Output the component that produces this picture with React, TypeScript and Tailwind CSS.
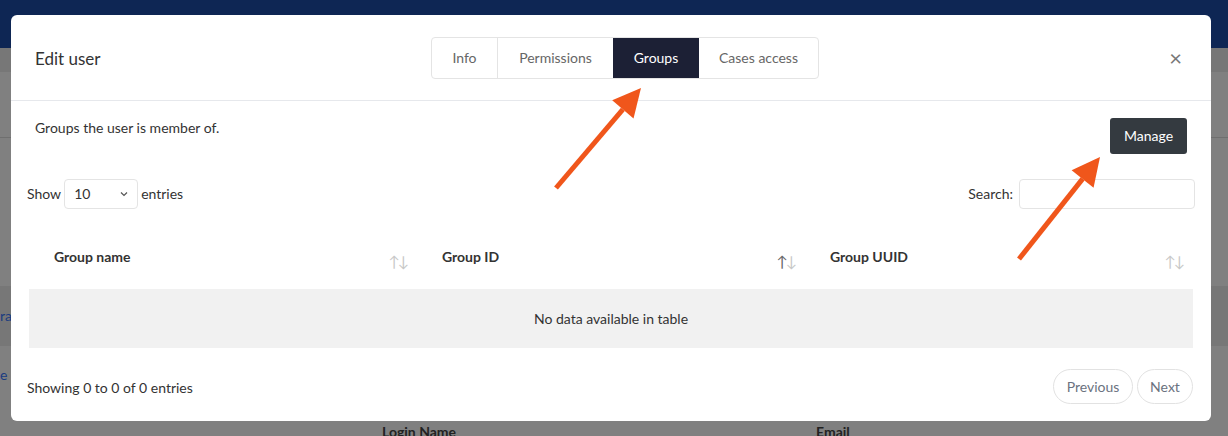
import React from 'react';

const tabs = ['Info', 'Permissions', 'Groups', 'Cases access'];

function SortIcon({ dark }: { dark?: boolean }) {
  return (
    <span className="flex text-[15px] font-normal leading-none tracking-[-2px]">
      <span className={dark ? 'text-[#666]' : 'text-[#c8c8c8]'}>↑</span>
      <span className="text-[#c8c8c8]">↓</span>
    </span>
  );
}

function Arrow({ x1, y1, x2, y2 }: { x1: number; y1: number; x2: number; y2: number }) {
  const ang = Math.atan2(y2 - y1, x2 - x1);
  const len = 28;
  const w = 14;
  const bx = x2 - len * Math.cos(ang);
  const by = y2 - len * Math.sin(ang);
  const px = -Math.sin(ang) * w;
  const py = Math.cos(ang) * w;
  return (
    <g>
      <line x1={x1} y1={y1} x2={bx} y2={by} stroke="#f0561b" strokeWidth={5} />
      <polygon points={`${x2},${y2} ${bx + px},${by + py} ${bx - px},${by - py}`} fill="#f0561b" />
    </g>
  );
}

export default function App() {
  return (
    <div className="relative w-[1228px] h-[436px] overflow-hidden bg-[#808080]" style={{ fontFamily: 'Lato, "Open Sans", sans-serif' }}>
      {/* dimmed page behind */}
      <div className="h-12 bg-[#0e2654]" />
      <div className="h-6 bg-[#777]" />
      <div className="h-[66px] border-b border-[#6f6f6f]" />
      <div className="h-[148px]" />
      <div className="h-[60px] bg-[#777] flex items-center">
        <span className="text-[#1a3c80] text-sm">rat</span>
      </div>
      <div className="h-[80px] pt-[16px]">
        <span className="text-[#1a3c80] text-sm">e</span>
      </div>
      <div className="flex text-sm font-bold text-[#222] -mt-[4px]">
        <span className="ml-[382px]">Login Name</span>
        <span className="ml-[360px]">Email</span>
      </div>

      {/* modal */}
      <div className="absolute left-[11px] top-[15px] w-[1200px] h-[406px] bg-white rounded-md flex flex-col">
        <div className="h-[86px] border-b border-[#e6e8ec] flex items-center px-6 relative">
          <h2 className="text-[17px] text-[#333] w-[396px] pt-[3px]">Edit user</h2>
          <div className="flex border border-[#e4e4e4] rounded h-[42px] text-sm text-[#666]">
            {tabs.map((t) => (
              <div
                key={t}
                className={`flex items-center justify-center ${t === 'Groups' ? 'bg-[#1c2035] text-white w-[86px]' : ''} ${t === 'Info' ? 'w-[66px] border-r border-[#e4e4e4]' : ''} ${t === 'Permissions' ? 'w-[115px]' : ''} ${t === 'Cases access' ? 'w-[119px]' : ''}`}
              >
                {t}
              </div>
            ))}
          </div>
          <button className="ml-auto mr-[5px] text-[#777] text-[22px] leading-none">×</button>
        </div>

        <div className="px-6 pt-[17px] flex items-start justify-between">
          <p className="text-sm text-[#333]">Groups the user is member of.</p>
          <button className="bg-[#343a40] text-white text-sm rounded-[3px] w-[77px] h-9">Manage</button>
        </div>

        <div className="px-4 mt-[25px] flex items-center justify-between text-sm text-[#333]">
          <div className="flex items-center gap-[3px]">
            <span>Show</span>
            <div className="w-[74px] h-[30px] border border-[#e4e4e4] rounded flex items-center justify-between px-[9px]">
              <span>10</span>
              <svg width="8" height="6" viewBox="0 0 8 6"><path d="M1 1.5l3 3 3-3" fill="none" stroke="#555" strokeWidth="1.2" /></svg>
            </div>
            <span>entries</span>
          </div>
          <div className="flex items-center gap-[6px]">
            <span>Search:</span>
            <div className="w-[176px] h-[30px] border border-[#e4e4e4] rounded" />
          </div>
        </div>

        <div className="mx-[18px] mt-[17px]">
          <div className="grid grid-cols-3 h-[63px] text-sm font-bold text-[#333]">
            {['Group name', 'Group ID', 'Group UUID'].map((h, i) => (
              <div key={h} className="flex justify-between pl-[25px] pr-[10px] pt-[21px]">
                <span>{h}</span>
                <span className="pt-[7px]"><SortIcon dark={i === 1} /></span>
              </div>
            ))}
          </div>
          <div className="h-[59px] bg-[#f1f1f1] flex items-center justify-center text-sm text-[#333]">
            No data available in table
          </div>
        </div>

        <div className="pl-4 pr-[18px] mt-[21px] flex items-center justify-between text-sm">
          <span className="text-[#333] pt-[3px]">Showing 0 to 0 of 0 entries</span>
          <div className="flex gap-1 text-[#6b7280]">
            <button className="h-[35px] w-20 rounded-full border border-[#e2e2e2]">Previous</button>
            <button className="h-[35px] w-14 rounded-full border border-[#e2e2e2]">Next</button>
          </div>
        </div>
      </div>

      <svg className="absolute inset-0 pointer-events-none" width="1228" height="436">
        <Arrow x1={556} y1={188} x2={641} y2={88} />
        <Arrow x1={1019} y1={259} x2={1100} y2={157} />
      </svg>
    </div>
  );
}
